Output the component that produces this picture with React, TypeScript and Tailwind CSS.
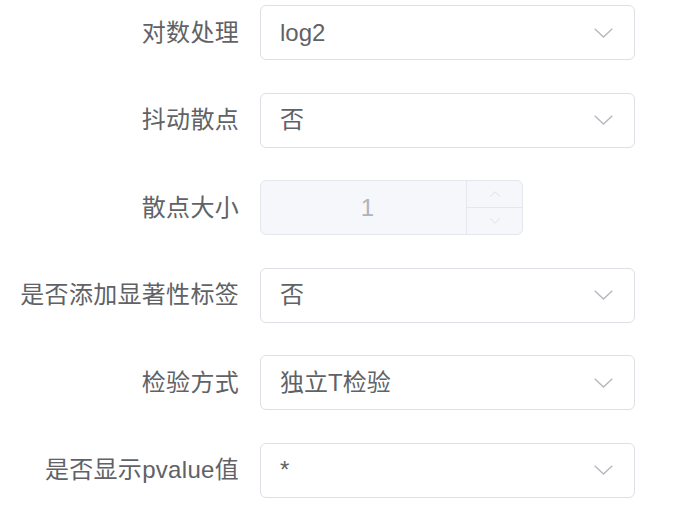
import { ChevronDown, ChevronUp } from 'lucide-react';

const fields = [
  { label: '对数处理', value: 'log2' },
  { label: '抖动散点', value: '否' },
  { label: '散点大小', value: '1', number: true },
  { label: '是否添加显著性标签', value: '否' },
  { label: '检验方式', value: '独立T检验' },
  { label: '是否显示pvalue值', value: '*' },
];

function SelectBox({ value }: { value: string }) {
  return (
    <div className="flex h-[55px] w-[375px] items-center justify-between rounded-[6px] border border-[#dcdfe6] bg-white pl-[19px] pr-[21px]">
      <span className="text-[24px] text-[#606266]">{value}</span>
      <svg width="19" height="10" viewBox="0 0 19 10" fill="none" className="text-[#b4b7be]">
        <path d="M0.7 0.7 L9.5 9 L18.3 0.7" stroke="currentColor" strokeWidth="1.3" />
      </svg>
    </div>
  );
}

function NumberBox({ value }: { value: string }) {
  return (
    <div className="flex h-[55px] w-[263px] rounded-[6px] border border-[#e4e7ed] bg-[#f5f7fa]">
      <div className="flex flex-1 items-center justify-center pl-[8px] text-[24px] text-[#b0b3ba]">{value}</div>
      <div className="flex w-[56px] flex-col border-l border-[#e4e7ed]">
        <div className="flex flex-1 items-center justify-center border-b border-[#e4e7ed] text-[#dcdfe6]">
          <ChevronUp size={18} strokeWidth={1.3} />
        </div>
        <div className="flex flex-1 items-center justify-center text-[#dcdfe6]">
          <ChevronDown size={18} strokeWidth={1.3} />
        </div>
      </div>
    </div>
  );
}

export default function App() {
  return (
    <div
      className="h-[515px] w-[673px] bg-white pt-[5px]"
      style={{ fontFamily: '"Liberation Sans", "Noto Sans CJK SC", sans-serif' }}
    >
      <div className="flex flex-col gap-[32.6px]">
        {fields.map((f) => (
          <div key={f.label} className="flex items-center">
            <div className="w-[260px] pr-[21px] text-right text-[24px] tracking-[0.3px] text-[#606266]">{f.label}</div>
            {f.number ? <NumberBox value={f.value} /> : <SelectBox value={f.value} />}
          </div>
        ))}
      </div>
    </div>
  );
}
